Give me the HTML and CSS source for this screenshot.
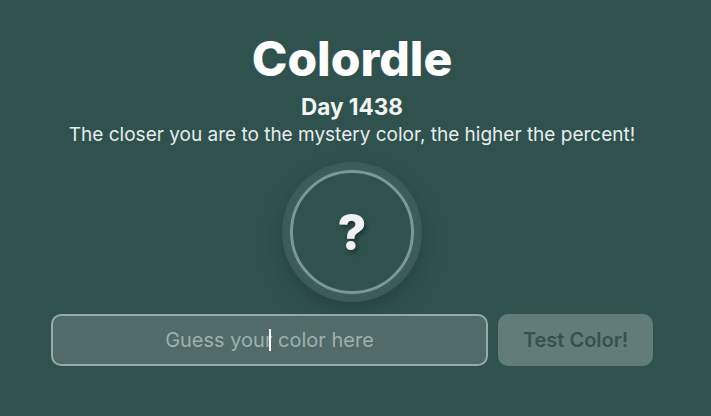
FILE: index.html
```html
<!DOCTYPE HTML>
<html>

<head>
    <meta charset="utf-8">
    <link rel="stylesheet" href="styles.css">
</head>

<body>
    <main class="game">
        <h1 class="title">Colordle</h1>
        <h2 class="day">Day 1438</h2>
        <p class="hint">The closer you are to the mystery color, the higher the percent!</p>

        <div class="swatch">
            <div class="swatch-inner">?</div>
        </div>

        <form class="guess-row">
            <div class="guess-field">
                <input class="guess" type="text" placeholder="Guess your color here">
            </div>
            <button class="test" type="button">Test Color!</button>
        </form>
    </main>
</body>

</html>
```

FILE: styles.css
```css
html,
body {
    margin: 0;
    height: 100%;
}

body {
    background-color: #2f524f;
    font-family: Inter, "Noto Sans", sans-serif;
    color: #fff;
}

.game {
    display: flex;
    flex-direction: column;
    align-items: center;
    padding: 30px 7px 0 0;
}

.title {
    margin: 0;
    font-size: 48px;
    line-height: 58px;
    font-weight: 800;
}

.day {
    margin: 5px 0 0;
    font-size: 22.5px;
    line-height: 27px;
    font-weight: 700;
    color: #f2f5f4;
}

.hint {
    margin: 3px 0 0;
    font-size: 19px;
    line-height: 24px;
    color: #e6eceb;
}

.swatch {
    margin-top: 15px;
    width: 140px;
    height: 140px;
    border-radius: 50%;
    background-color: rgba(255, 255, 255, 0.06);
    box-shadow: 0 10px 24px rgba(0, 0, 0, 0.18);
    display: flex;
    align-items: center;
    justify-content: center;
}

.swatch-inner {
    box-sizing: border-box;
    width: 124px;
    height: 124px;
    border-radius: 50%;
    border: 3px solid #7b9794;
    background-color: #2f524f;
    display: flex;
    align-items: center;
    justify-content: center;
    font-size: 50px;
    font-weight: 800;
    color: #f1f1f1;
    text-shadow: 2px 3px 4px rgba(0, 0, 0, 0.35);
}

.guess-row {
    margin-top: 12px;
    display: flex;
    gap: 10px;
}

.guess-field {
    position: relative;
}

.guess-field::after {
    content: "";
    position: absolute;
    left: 218px;
    top: 15px;
    width: 2px;
    height: 22px;
    background-color: #fff;
}

.guess {
    box-sizing: border-box;
    width: 437px;
    height: 52px;
    border: 2px solid #95aba8;
    border-radius: 10px;
    background-color: #506b69;
    font-family: inherit;
    font-size: 20px;
    text-align: center;
    color: #fff;
    outline: none;
}

.guess::placeholder {
    color: #9cb1ae;
}

.test {
    box-sizing: border-box;
    width: 155px;
    height: 52px;
    border: none;
    border-radius: 10px;
    background-color: #627c7a;
    font-family: inherit;
    font-size: 20px;
    font-weight: 600;
    color: #335351;
    cursor: pointer;
}
```
